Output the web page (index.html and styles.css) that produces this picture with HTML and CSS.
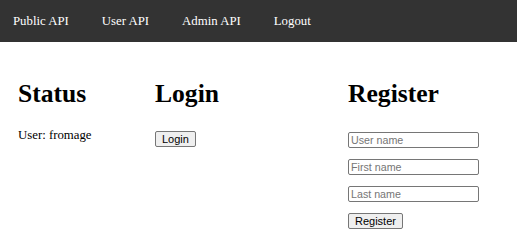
FILE: index.html
```html
<!DOCTYPE html>
<html lang="en">
  <head>
    <meta charset="UTF-8" />
    <meta name="viewport" content="width=device-width, initial-scale=1.0" />
    <title>API</title>
    <link rel="stylesheet" href="styles.css">
  </head>
  <body>
    <nav class="topNav">
      <a href="#">Public API</a>
      <a href="#">User API</a>
      <a href="#">Admin API</a>
      <a href="#">Logout</a>
    </nav>
    <main class="content">
      <div class="statusCol">
        <h1>Status</h1>
        <p>User: fromage</p>
      </div>
      <div class="loginCol">
        <h1>Login</h1>
        <form class="loginForm">
          <button type="button">Login</button>
        </form>
      </div>
      <div class="registerCol">
        <h1>Register</h1>
        <form class="registerForm">
          <input type="text" placeholder="User name" />
          <input type="text" placeholder="First name" />
          <input type="text" placeholder="Last name" />
          <button type="submit">Register</button>
        </form>
      </div>
    </main>
  </body>
</html>
```

FILE: styles.css
```css
* {
  margin: 0px;
  padding: 0px;
}
body {
  font-family: "Liberation Serif", "Times New Roman", serif;
  font-size: 12.8px;
  color: #000;
  background-color: #fff;
}
.topNav {
  height: 42px;
  background-color: #333;
  display: flex;
  align-items: center;
  gap: 33px;
  padding-left: 13px;
}
.topNav a {
  color: #fff;
  text-decoration: none;
}
.content {
  display: flex;
  padding: 20px 0px 0px 18px;
}
h1 {
  font-size: 25.6px;
  font-weight: bold;
  margin: 17px 0px;
}
.statusCol {
  width: 137px;
}
.statusCol p {
  margin-top: 19px;
}
.loginCol {
  width: 193px;
}
.loginForm {
  margin-top: 22px;
}
.registerForm {
  display: flex;
  flex-direction: column;
  align-items: flex-start;
  gap: 11px;
  margin-top: 23px;
}
button {
  font-family: "Liberation Sans", Arial, sans-serif;
  font-size: 11px;
  height: 16px;
  padding: 0px 6px;
  background-color: #efefef;
  border: 1px solid #767676;
  border-radius: 2px;
  color: #000;
}
input {
  font-family: "Liberation Sans", Arial, sans-serif;
  font-size: 10.7px;
  width: 131px;
  height: 16px;
  box-sizing: border-box;
  padding: 0px 2px;
  border: 1px solid #767676;
  border-radius: 2px;
  outline: none;
}
input::placeholder {
  color: #757575;
}
```
